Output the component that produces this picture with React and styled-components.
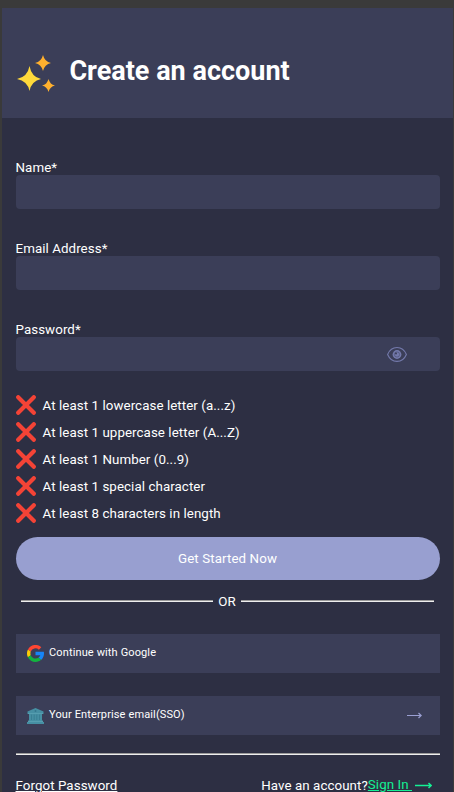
import React from "react";
import styled, { createGlobalStyle } from "styled-components";

const GlobalStyle = createGlobalStyle`
  * { box-sizing: border-box; }
  body {
    margin: 0;
    background: #3a3a3a;
    color: #fff;
    font: 400 13.33px/15px Roboto, sans-serif;
    letter-spacing: 0.07px;
    overflow: hidden;
  }
  svg { display: block; flex: none; }
`;

const Page = styled.div`
  height: 792px;
  padding: 8px 1px 0 2px;
  overflow: hidden;
`;
const Panel = styled.main`
  height: 784px;
  background: #2d2f43;
`;
const Header = styled.header`
  height: 110px;
  padding: 46px 0 0 15px;
  display: flex;
  align-items: flex-start;
  background: #3b3e58;
`;
const Title = styled.h1`
  margin: 1px 0 0 13.4px;
  font-size: 27px;
  line-height: 32px;
  font-weight: 700;
  letter-spacing: 0;
  white-space: nowrap;
`;
const Form = styled.form`
  display: flex;
  flex-direction: column;
  padding: 42px 13px 0 14px;
`;
const Field = styled.label`
  display: block;
  height: 49px;
  margin-bottom: 32px;
`;
const Caption = styled.span`
  display: block;
  margin-left: -0.5px;
`;
const Control = styled.div`
  height: 34px;
  display: flex;
  align-items: center;
  justify-content: flex-end;
  padding-right: 33px;
  border-radius: 4px;
  background: #3b3e58;
`;
const Input = styled.input`
  flex: 1;
  min-width: 0;
  height: 100%;
  padding: 0 10px;
  border: 0;
  outline: 0;
  background: transparent;
  color: #fff;
`;
const Rules = styled.ul`
  list-style: none;
  margin: -8px 0 14px;
  padding: 0;
  display: grid;
  gap: 7px;
`;
const Rule = styled.li`
  height: 20px;
  display: flex;
  align-items: center;
  gap: 6.5px;
`;
const Submit = styled.button`
  height: 43px;
  padding: 0 1px 0 0;
  border: 0;
  border-radius: 22px;
  background: #989fd0;
  color: #fff;
  font: inherit;
  letter-spacing: 0.1px;
`;
const Divider = styled.div`
  height: 15px;
  margin: 14px 6px 0 5px;
  display: flex;
  align-items: center;
  justify-content: space-between;
`;
const Line = styled.span`
  height: 2px;
  width: ${(p) => p.$width};
  margin-bottom: 2px;
  border-top: 1px solid #9a9a9a;
  background: #eee;
`;
const Provider = styled.button`
  height: 39px;
  margin: ${(p) => p.$top} 0 0;
  padding: 0 18px 2px 11px;
  display: flex;
  align-items: center;
  border: 0;
  background: #3b3e58;
  color: #fff;
  font: 400 11px/14px Roboto, sans-serif;
  letter-spacing: 0.13px;
`;
const ProviderIcon = styled.span`
  padding-top: ${(p) => p.$drop};
  margin-right: 5px;
`;
const Trailing = styled.span`
  margin-left: auto;
`;
const Rule100 = styled.hr`
  width: 100%;
  height: 2px;
  margin: 18px 0 0;
  border: 0;
  border-top: 1px solid #9a9a9a;
  background: #eee;
`;
const Footer = styled.footer`
  margin: 23px 0 0 -0.5px;
  display: flex;
  justify-content: space-between;
  white-space: nowrap;
`;
const Link = styled.a`
  color: inherit;
  text-decoration: underline;
`;
const SignIn = styled.div`
  display: flex;
  padding-right: 8px;
`;
const GreenLink = styled(Link)`
  color: #14f195;
  margin-top: -1px;
  white-space: pre;
`;
const ArrowSlot = styled.span`
  padding: 3px 0 0 3px;
`;

const Sparkles = () => (
  <svg width="39" height="38" viewBox="0 0 39 38">
    <path d="M12.500 12Q14.500 23 24 25Q14.500 27 12.500 37Q10.500 27 0 25Q10.500 23 12.500 12Z" fill="#ffd93b" />
    <path d="M26 1Q27.500 7.500 34 9Q27.500 10.500 26 17Q24.500 10.500 18 9Q24.500 7.500 26 1Z" fill="#ffb02e" />
    <path d="M31.500 25Q33 30.500 38 31.500Q33 32.500 31.500 38Q30 32.500 25 31.500Q30 30.500 31.500 25Z" fill="#ffb02e" />
  </svg>
);
const Cross = () => (
  <svg width="20" height="20" viewBox="0 0 20 20">
    <path d="M2.200 2.200L17.800 17.800M17.800 2.200L2.200 17.800" stroke="#f44336" strokeWidth="4.200" strokeLinecap="round" />
  </svg>
);
const Eye = () => (
  <svg width="20" height="16" viewBox="0 0 20 16" fill="none" stroke="#747aac">
    <path d="M.6 8.500C2.500 4 5.800 1.500 10 1.500S17.500 4 19.400 8.500C17.500 13 14.200 15.400 10 15.400S2.500 13 .6 8.500Z" strokeWidth="1.100" />
    <circle cx="10" cy="8.500" r="4.400" fill="#747aac" stroke="none" />
    <circle cx="10" cy="8.500" r="2.600" stroke="#50557c" strokeWidth=".8" />
    <circle cx="9" cy="7.500" r="1" fill="#3b3e58" stroke="none" />
  </svg>
);
const Google = () => (
  <svg width="17" height="17" viewBox="4 4 40 40">
    <path fill="#fbcc05" d="M6.300 14.700A20 20 0 0 0 6.200 33L12.700 28A12 12 0 0 1 12.900 19.500Z" />
    <path fill="#ff4632" d="m6.300 14.700 6.600 4.800A12 12 0 0 1 32 15l5.700-5.700A20 20 0 0 0 6.300 14.700Z" />
    <path fill="#12b33f" d="M24 44c5.200 0 9.900-2 13.400-5.200l-6.200-5.200A12 12 0 0 1 12.700 28l-6.500 5A20 20 0 0 0 24 44Z" />
    <path fill="#1685f8" d="M43.600 20H24v8h11.300c-.8 2.300-2.200 4.200-4.100 5.600l6.200 5.200C37 39.200 44 34 44 24c0-1.300-.1-2.700-.4-4Z" />
  </svg>
);
const Bank = () => (
  <svg width="17" height="16" viewBox="0 0 17 16">
    <path d="M8.500 0 16.500 3.500V6H.5V3.500ZM2 6H15V12.500H2ZM1 12.500H16V14H17V16H0V14H1Z" fill="#468fa3" />
    <path d="M4.500 6.500V12M7.200 6.500V12M9.800 6.500V12M12.500 6.500V12" stroke="#34788e" strokeWidth=".7" />
    <path d="M1 5.500H16M1 13.500H16" stroke="#62a7b8" strokeWidth=".6" />
    <circle cx="8.500" cy="3" r="1" fill="#34788e" />
  </svg>
);
const Arrow = ({ width, color, stroke = 1.2 }) => (
  <svg width={width} height="8" viewBox={`0 0 ${width} 8`} fill="none" stroke={color} strokeWidth={stroke}>
    <path d={`M0 4.500H${width - 1}M${width - 3.5} 2L${width - 0.8} 4.500L${width - 3.5} 7`} />
  </svg>
);

const requirements = [
  "At least 1 lowercase letter (a...z)",
  "At least 1 uppercase letter (A...Z)",
  "At least 1 Number (0...9)",
  "At least 1 special character",
  "At least 8 characters in length",
];

export default function App() {
  return (
    <Page>
      <GlobalStyle />
      <Panel>
        <Header>
          <Sparkles />
          <Title>Create an account</Title>
        </Header>
        <Form>
          <Field><Caption>Name*</Caption><Control><Input type="text" /></Control></Field>
          <Field><Caption>Email Address*</Caption><Control><Input type="email" /></Control></Field>
          <Field><Caption>Password*</Caption><Control><Input type="password" /><Eye /></Control></Field>
          <Rules>
            {requirements.map((text) => <Rule key={text}><Cross />{text}</Rule>)}
          </Rules>
          <Submit type="button">Get Started Now</Submit>
          <Divider><Line $width="192px" />OR<Line $width="193px" /></Divider>
          <Provider type="button" $top="25px">
            <ProviderIcon $drop="2px"><Google /></ProviderIcon>Continue with Google
          </Provider>
          <Provider type="button" $top="23px">
            <ProviderIcon $drop="3px"><Bank /></ProviderIcon>Your Enterprise email(SSO)
            <Trailing><Arrow width={15} color="#9a9fd2" /></Trailing>
          </Provider>
          <Rule100 />
          <Footer>
            <Link>Forgot Password</Link>
            <SignIn>
              Have an account?<GreenLink>Sign In </GreenLink>
              <ArrowSlot><Arrow width={17} color="#14f195" stroke={1.5} /></ArrowSlot>
            </SignIn>
          </Footer>
        </Form>
      </Panel>
    </Page>
  );
}
